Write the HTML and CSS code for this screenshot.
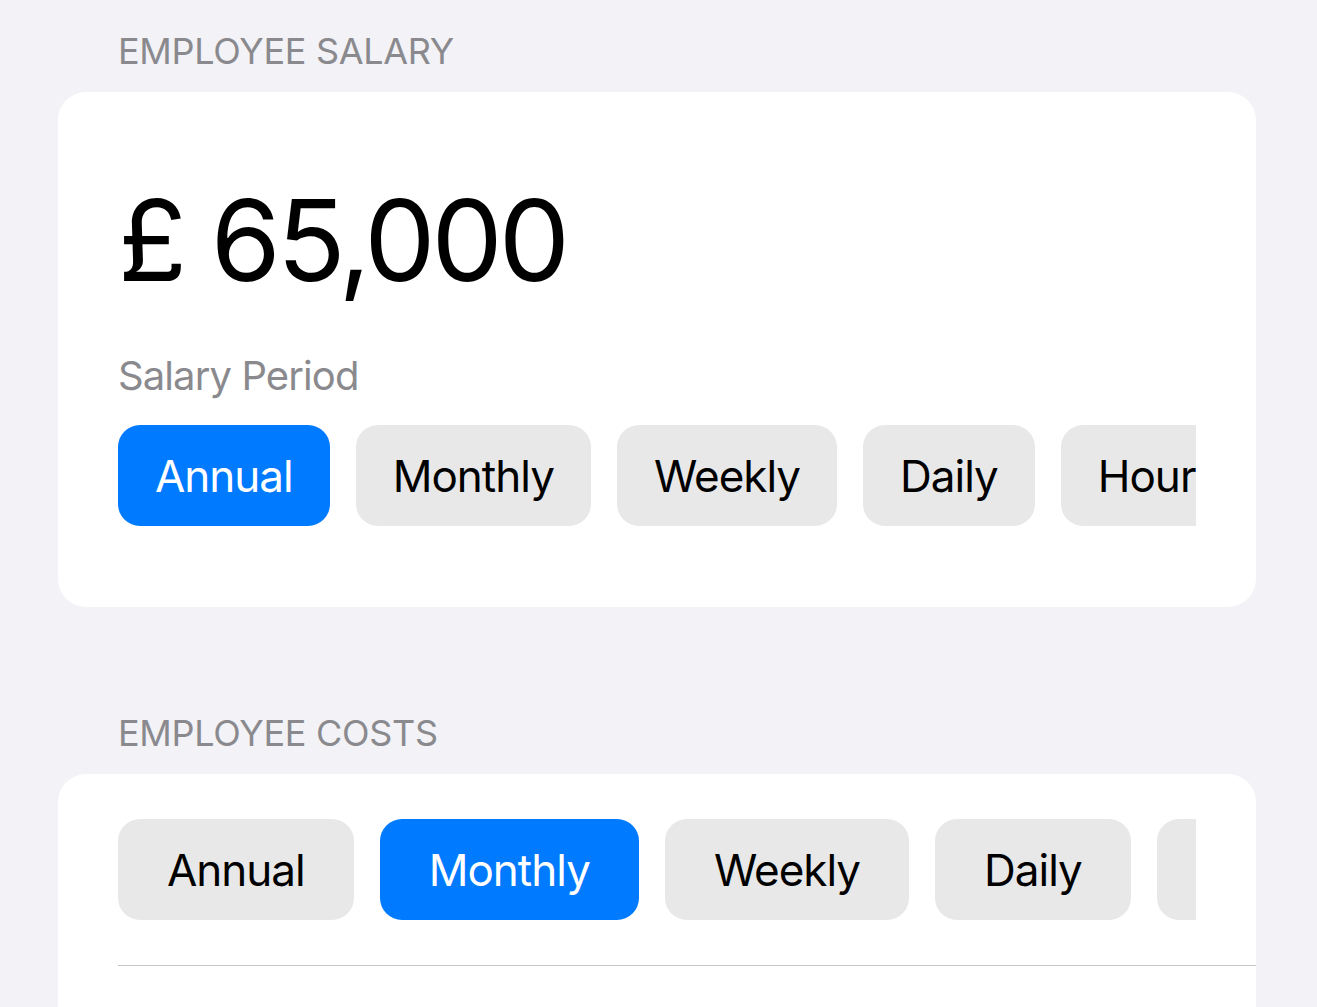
FILE: index.html
```html
<!DOCTYPE html>
<html lang="en">
<head>
<meta charset="utf-8">
<title>Employee Salary</title>
<link rel="stylesheet" href="styles.css">
</head>
<body>
<main class="page">
  <section class="group group-salary">
    <h2 class="group-title">EMPLOYEE SALARY</h2>
    <div class="card card-salary">
      <div class="amount">£ 65,000</div>
      <div class="field-label">Salary Period</div>
      <div class="chips">
        <span class="chip chip-active">Annual</span>
        <span class="chip">Monthly</span>
        <span class="chip">Weekly</span>
        <span class="chip">Daily</span>
        <span class="chip">Hourly</span>
      </div>
    </div>
  </section>
  <section class="group group-costs">
    <h2 class="group-title">EMPLOYEE COSTS</h2>
    <div class="card card-costs">
      <div class="chips chips-wide">
        <span class="chip">Annual</span>
        <span class="chip chip-active">Monthly</span>
        <span class="chip">Weekly</span>
        <span class="chip">Daily</span>
        <span class="chip">Hourly</span>
      </div>
      <div class="divider"></div>
      <div class="row-below"></div>
    </div>
  </section>
</main>
</body>
</html>
```

FILE: styles.css
```css
* { box-sizing: border-box; }
html, body {
  margin: 0;
  padding: 0;
  background: #F2F2F7;
  font-family: Inter, "Noto Sans", "Liberation Sans", sans-serif;
  -webkit-font-smoothing: antialiased;
}
.page {
  padding: 29px 61px 0 58px;
  height: 1007px;
  overflow: hidden;
}
.group-title {
  margin: 0 0 19px 60px;
  font-size: 36px;
  line-height: 44px;
  font-weight: 400;
  color: #8A8A8E;
  letter-spacing: -0.3px;
}
.group-costs { margin-top: 104px; }
.card {
  background: #FFFFFF;
  border-radius: 28px;
  padding: 0 60px;
}
.card-salary {
  padding-top: 92px;
  padding-bottom: 81px;
}
.card-costs {
  padding-top: 45px;
  padding-right: 0;
  padding-bottom: 200px;
  border-radius: 28px 28px 0 0;
}
.amount {
  font-size: 113px;
  line-height: 113px;
  font-weight: 400;
  color: #000;
  letter-spacing: -4px;
}
.field-label {
  margin-top: 55px;
  font-size: 40px;
  line-height: 48px;
  color: #8A8A8E;
  letter-spacing: -0.9px;
}
.chips {
  margin-top: 25px;
  display: flex;
  gap: 26px;
  overflow: hidden;
}
.chips-wide {
  margin-top: 0;
  margin-right: 60px;
}
.chip {
  flex: 0 0 auto;
  height: 101px;
  display: flex;
  align-items: center;
  padding: 0 37px;
  border-radius: 22px;
  background: #E8E8E9;
  color: #000;
  font-size: 44px;
  line-height: 1;
  letter-spacing: -1px;
}
.chips-wide .chip { padding: 0 49px; }
.chip-active {
  background: #007AFF;
  color: #FFFFFF;
}
.divider {
  margin-top: 45px;
  height: 1px;
  background: #C6C6C8;
}
.row-below { height: 100px; }
```
